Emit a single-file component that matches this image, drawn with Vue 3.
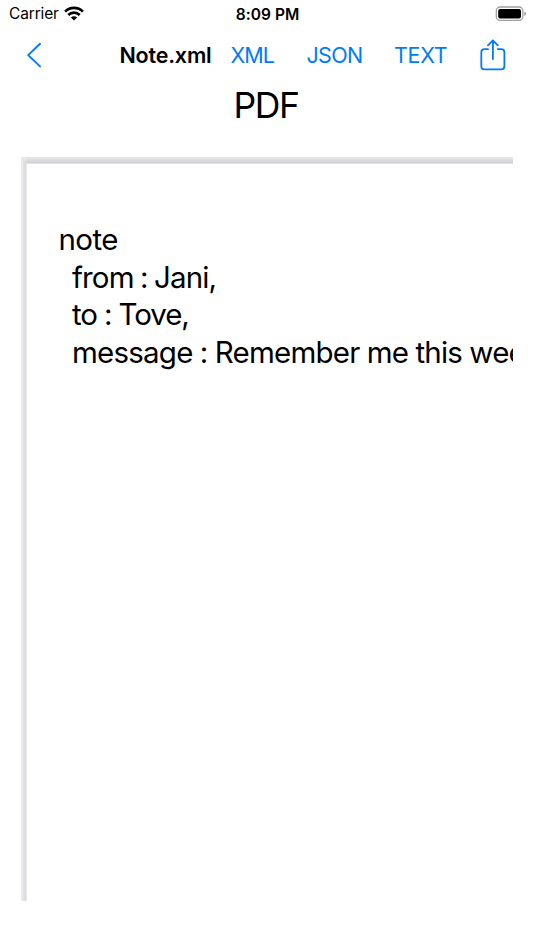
<template>
	<div class="screen">
		<div class="status-bar">
			<div class="status-left">
				<span class="carrier">Carrier</span>
				<svg class="wifi" width="20" height="15" viewBox="0 0 20 15">
					<g fill="none" stroke="#000" stroke-width="2.7">
						<path d="M1.1 5.6C6.2 .7 13.8 .7 18.9 5.6" />
						<path d="M4.3 8.9C7.6 5.8 12.4 5.8 15.7 8.9" />
					</g>
					<path d="M6.9 11.4C8.7 9.7 11.3 9.7 13.1 11.4L10 14.5Z" />
				</svg>
			</div>
			<span class="clock">8:09 PM</span>
			<svg class="battery" width="32" height="16" viewBox="0 0 32 16">
				<rect x="1.3" y="1" width="26.6" height="13.4" rx="3.8" fill="none" stroke="#a0a0a0" stroke-width="1.3" />
				<rect x="3.2" y="3" width="22.8" height="9.4" rx="2" />
				<path d="M29.3 5.5Q31.2 6.2 31.2 7.7T29.3 9.9Z" fill="#a0a0a0" />
			</svg>
		</div>

		<div class="nav-bar">
			<svg class="back" width="16" height="26" viewBox="0 0 16 26">
				<path d="M14 1.8L2.2 13.1L14 24.4" fill="none" stroke="#007aff" stroke-width="2" stroke-linecap="round" stroke-linejoin="round" />
			</svg>
			<span class="title">{{ fileName }}</span>
			<span v-for="item in formats" :key="item" :class="['format', item.toLowerCase()]">{{ item }}</span>
			<svg class="share" width="26" height="32" viewBox="0 0 26 32">
				<g fill="none" stroke="#007aff" stroke-width="1.8" stroke-linecap="round" stroke-linejoin="round">
					<path d="M8 10.2H4.5Q1.3 10.2 1.3 13.4V27.2Q1.3 30.4 4.5 30.4H21.2Q24.4 30.4 24.4 27.2V13.4Q24.4 10.2 21.2 10.2H17.8" />
					<path d="M12.9 20V1.3M8 6.3L12.9 1.3L17.8 6.3" />
				</g>
			</svg>
		</div>

		<h1 class="heading">PDF</h1>

		<div class="viewer">
			<div class="page">
				<div v-for="line in lines" :key="line.text" :class="['line', line.name, { nested: line.nested }]">{{ line.text }}</div>
			</div>
		</div>
	</div>
</template>

<script setup>
const fileName = 'Note.xml';
const formats = ['XML', 'JSON', 'TEXT'];

const lines = [
	{ name: 'root', text: 'note', nested: false },
	{ name: 'from', text: 'from : Jani,', nested: true },
	{ name: 'to', text: 'to : Tove,', nested: true },
	{ name: 'message', text: 'message : Remember me this weekend', nested: true },
];
</script>

<style>
body {
	margin: 0;
	background: #fff;
}
</style>

<style scoped>
.screen {
	width: 534px;
	height: 950px;
	overflow: hidden;
	background: #fff;
	color: #000;
	font-family: Inter, "Liberation Sans", sans-serif;
}
.status-bar {
	display: grid;
	grid-template-columns: 1fr auto 1fr;
	align-items: center;
	height: 28px;
	padding: 0 8px 0 9px;
}
.status-left {
	display: flex;
	align-items: center;
	gap: 5.5px;
}
.carrier {
	font-size: 15.5px;
	line-height: 28px;
	letter-spacing: -0.15px;
}
.wifi {
	margin-top: -2px;
}
.clock {
	font-size: 15.5px;
	font-weight: 600;
	letter-spacing: 0.05px;
}
.battery {
	justify-self: end;
	margin: -1px -1px 0 0;
}
.nav-bar {
	display: flex;
	align-items: center;
	height: 54px;
	padding-left: 26px;
	font-size: 21.5px;
	white-space: nowrap;
}
.title {
	width: 111px;
	margin-left: 77.5px;
	font-weight: 600;
	letter-spacing: -0.2px;
}
.format {
	color: #007aff;
	letter-spacing: -0.5px;
}
.xml {
	width: 76px;
	letter-spacing: -0.9px;
}
.json {
	width: 87.5px;
	letter-spacing: -0.7px;
}
.text {
	width: 86px;
	letter-spacing: -0.3px;
}
.heading {
	height: 46px;
	margin: 0;
	padding-right: 2px;
	text-align: center;
	font-size: 35.5px;
	font-weight: 400;
	line-height: 47px;
	letter-spacing: -1.4px;
}
.viewer {
	width: 492px;
	height: 744px;
	margin: 29px 0 0 21px;
	padding: 7px 0 0 6px;
	box-sizing: border-box;
	overflow: hidden;
	background:
		linear-gradient(to right, #ececef, #dadade 5px, #f4f4f5 6px) 0 6px / 6px 100% no-repeat,
		linear-gradient(to right, #ececef, #ececef00 7px),
		linear-gradient(to bottom, #e9e9ec, #d0d0d4 6px, #f4f4f5 7px);
}
.page {
	width: 620px;
	height: 800px;
	padding: 57px 0 0 32px;
	box-sizing: border-box;
	background: #fff;
}
.line {
	height: 37.5px;
	font-size: 29.5px;
	line-height: 37.5px;
	letter-spacing: -0.7px;
	white-space: nowrap;
}
.root {
	letter-spacing: -0.6px;
	text-indent: -0.5px;
}
.nested {
	padding-left: 13px;
}
.from {
	letter-spacing: -0.85px;
	word-spacing: -1.1px;
}
.to {
	letter-spacing: -1.05px;
	word-spacing: -0.2px;
}
.message {
	letter-spacing: -0.78px;
	word-spacing: -0.3px;
}
</style>
